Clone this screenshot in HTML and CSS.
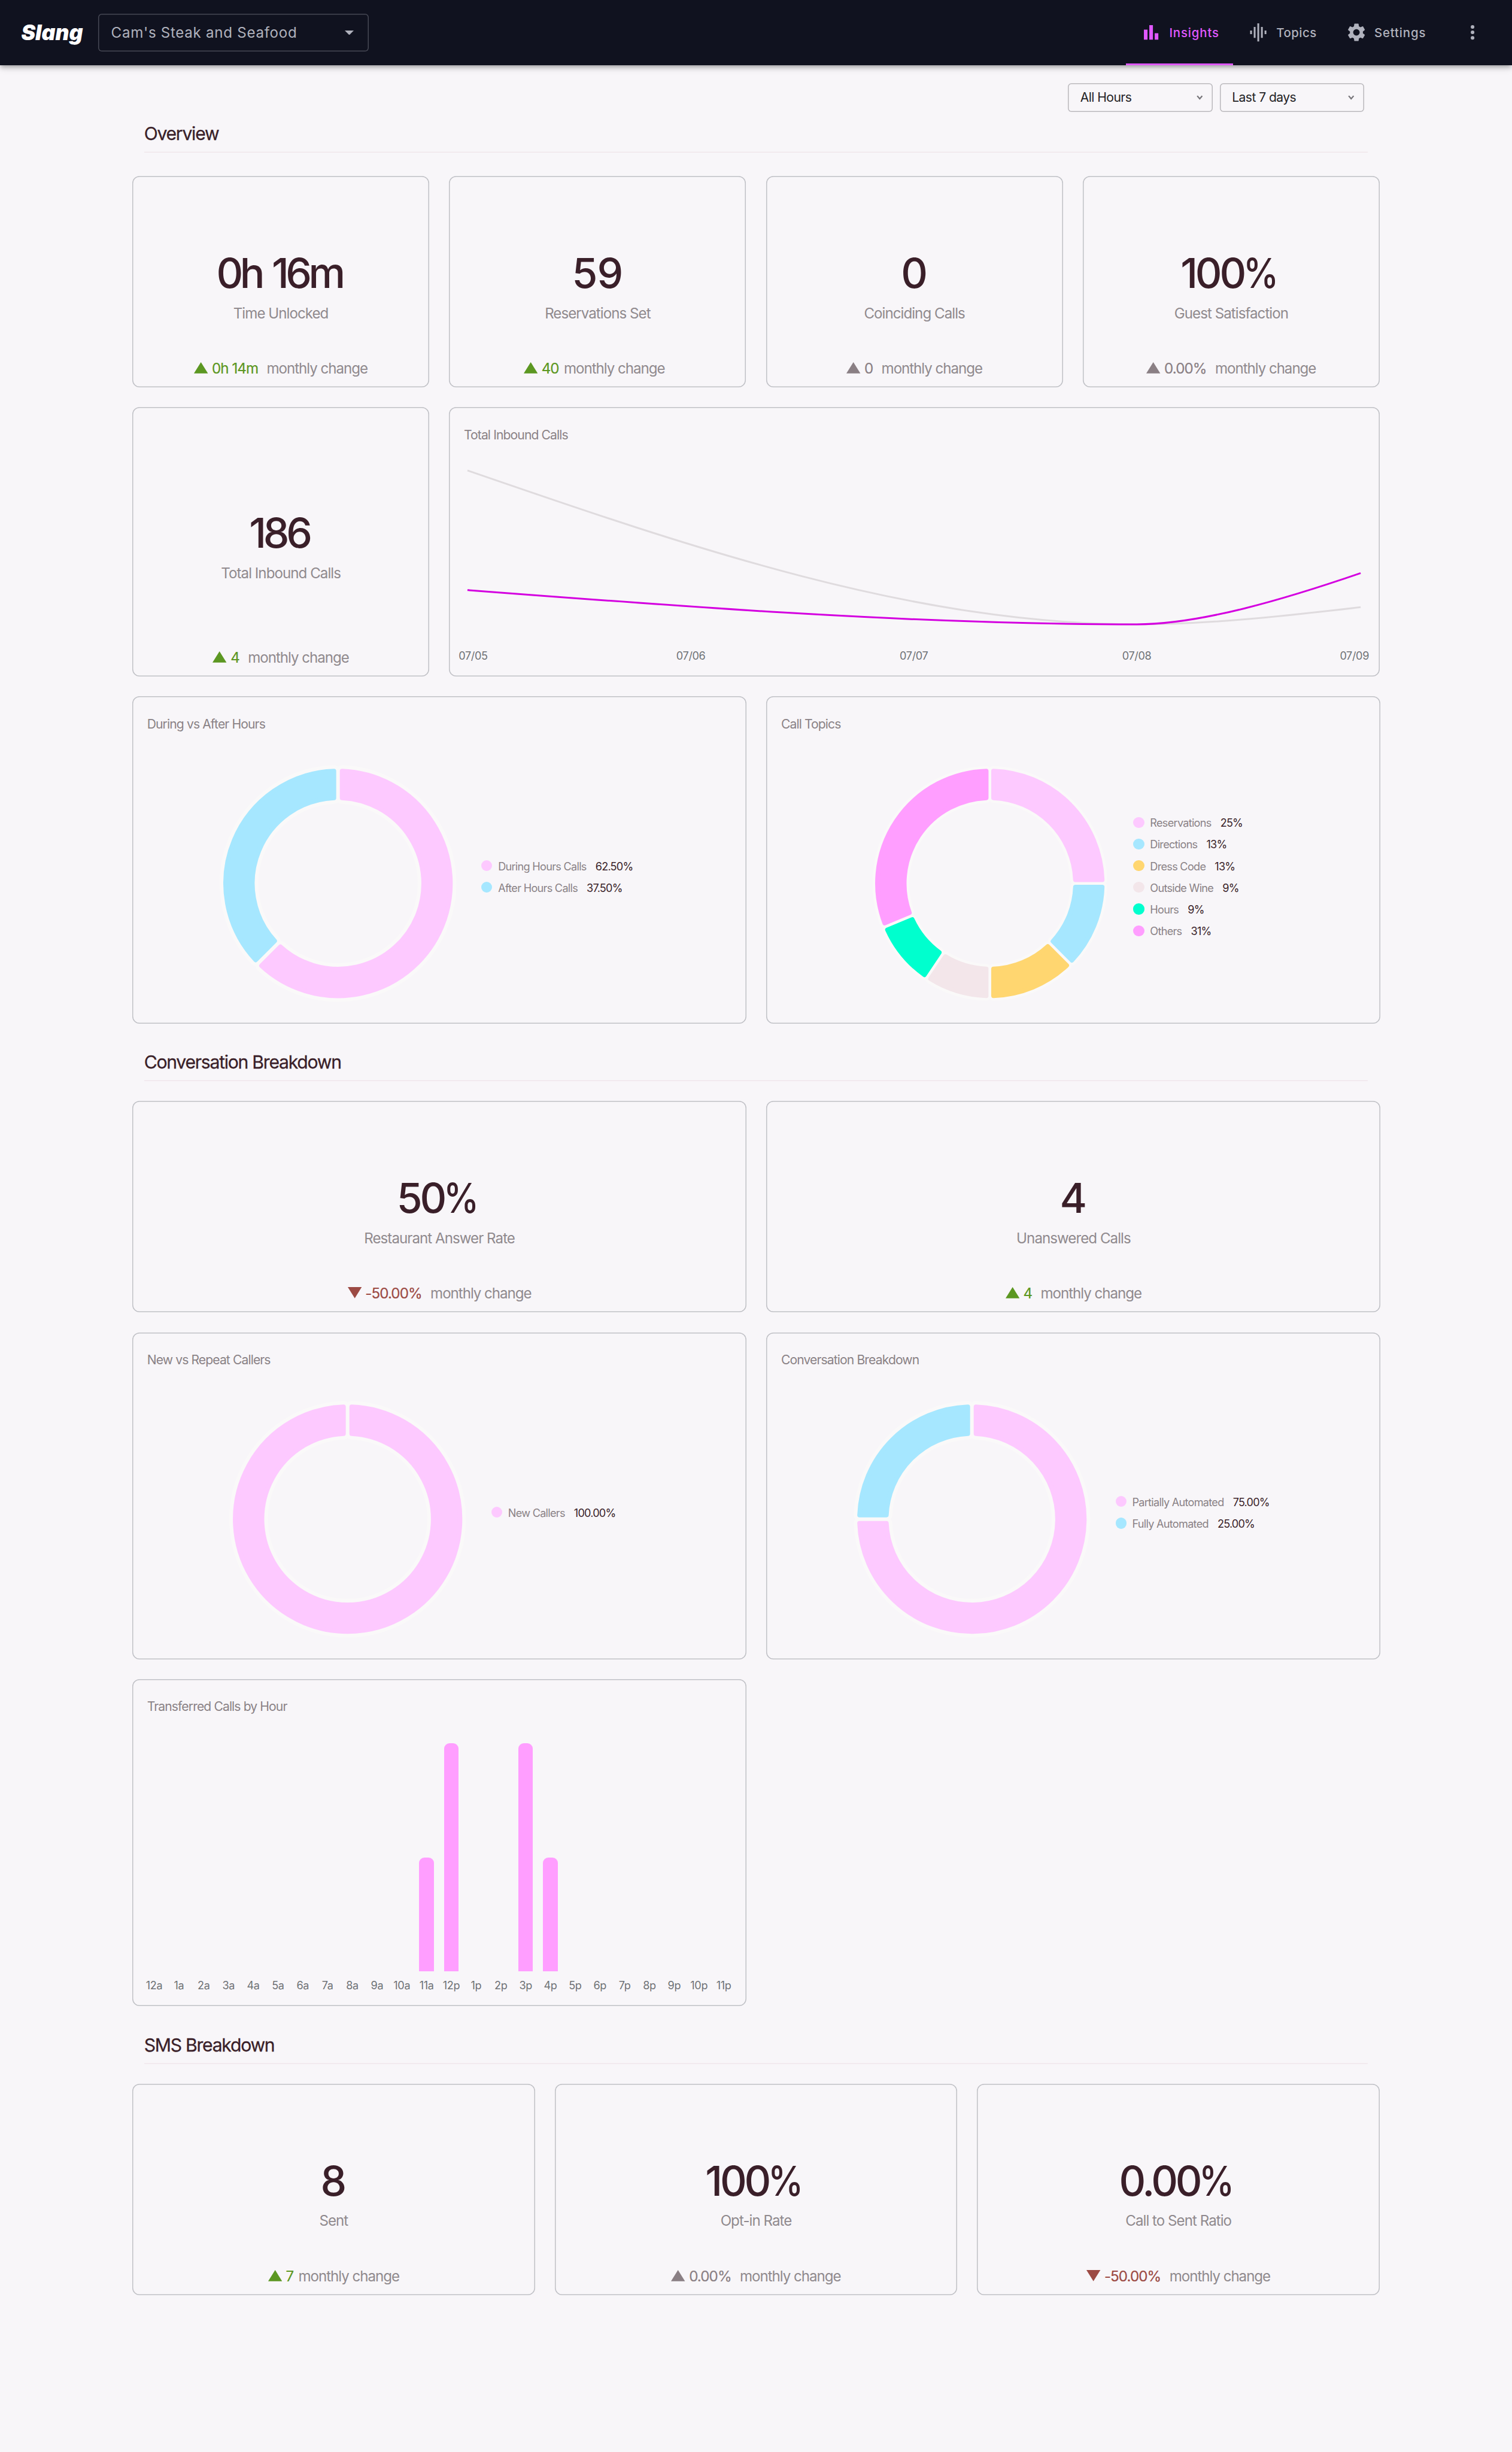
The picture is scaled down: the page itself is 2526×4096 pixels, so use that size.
FILE: index.html
```html
<!DOCTYPE html>
<html lang="en">
<head>
<meta charset="utf-8">
<title>Slang – Insights</title>
<link rel="stylesheet" href="styles.css">
</head>
<body>
<header class="topbar">
  <div class="logo">Slang</div>
  <div class="location">
    <span>Cam's Steak and Seafood</span>
    <svg class="location-arrow" viewBox="0 0 10 5"><path d="M0 0h10L5 5z"/></svg>
  </div>
  <nav class="nav">
    <a class="tab tab-insights active"><svg class="icon" viewBox="0 0 24 24"><path d="M4 9h4v11H4zm12 4h4v7h-4zm-6-9h4v16h-4z"/></svg><span>Insights</span></a>
    <a class="tab tab-topics"><svg class="icon" viewBox="0 0 24 24"><path d="M7 18h2V6H7v12zm4 4h2V2h-2v20zm-8-8h2v-4H3v4zm12 4h2V6h-2v12zm4-8v4h2v-4h-2z"/></svg><span>Topics</span></a>
    <a class="tab tab-settings"><svg class="icon" viewBox="0 0 24 24"><path d="M19.14,12.94c0.04-0.3,0.06-0.61,0.06-0.94c0-0.32-0.02-0.64-0.07-0.94l2.03-1.58c0.18-0.14,0.23-0.41,0.12-0.61 l-1.92-3.32c-0.12-0.22-0.37-0.29-0.59-0.22l-2.39,0.96c-0.5-0.38-1.03-0.7-1.62-0.94L14.4,2.81c-0.04-0.24-0.24-0.41-0.48-0.41 h-3.84c-0.24,0-0.43,0.17-0.47,0.41L9.25,5.35C8.66,5.59,8.12,5.92,7.63,6.29L5.24,5.33c-0.22-0.08-0.47,0-0.59,0.22L2.74,8.87 C2.62,9.08,2.66,9.34,2.86,9.48l2.03,1.58C4.84,11.36,4.8,11.69,4.8,12s0.02,0.64,0.07,0.94l-2.03,1.58 c-0.18,0.14-0.23,0.41-0.12,0.61l1.92,3.32c0.12,0.22,0.37,0.29,0.59,0.22l2.39-0.96c0.5,0.38,1.03,0.7,1.62,0.94l0.36,2.54 c0.05,0.24,0.24,0.41,0.48,0.41h3.84c0.24,0,0.44-0.17,0.47-0.41l0.36-2.54c0.59-0.24,1.13-0.56,1.62-0.94l2.39,0.96 c0.22,0.08,0.47,0,0.59-0.22l1.92-3.32c0.12-0.22,0.07-0.47-0.12-0.61L19.14,12.94z M12,15.6c-1.98,0-3.6-1.62-3.6-3.6 s1.62-3.6,3.6-3.6s3.6,1.62,3.6,3.6S13.98,15.6,12,15.6z"/></svg><span>Settings</span></a>
    <svg class="icon more" viewBox="0 0 24 24"><circle cx="12" cy="6" r="2"/><circle cx="12" cy="12" r="2"/><circle cx="12" cy="18" r="2"/></svg>
  </nav>
</header>

<main class="page">
  <div class="filters">
    <div class="filter"><span>All Hours</span><svg class="chevron" viewBox="0 0 14 10"><path d="M1.5 1.5 7 8l5.500-6.500"/></svg></div>
    <div class="filter"><span>Last 7 days</span><svg class="chevron" viewBox="0 0 14 10"><path d="M1.500 1.500 7 8l5.500-6.500"/></svg></div>
  </div>

  <h2 class="heading heading-first">Overview</h2>
  <section class="grid grid-4">
    <article class="card kpi">
      <div class="kpi-body"><div class="number time">0h 16m</div><div class="label">Time Unlocked</div></div>
      <div class="change up"><svg class="tri" viewBox="0 0 31 25"><path d="M0 25 15.500 0 31 25z"/></svg><b>0h 14m</b><span>monthly change</span></div>
    </article>
    <article class="card kpi">
      <div class="kpi-body"><div class="number wide">59</div><div class="label">Reservations Set</div></div>
      <div class="change up tight shifted"><svg class="tri" viewBox="0 0 31 25"><path d="M0 25 15.500 0 31 25z"/></svg><b>40</b><span>monthly change</span></div>
    </article>
    <article class="card kpi">
      <div class="kpi-body"><div class="number">0</div><div class="label">Coinciding Calls</div></div>
      <div class="change"><svg class="tri" viewBox="0 0 31 25"><path d="M0 25 15.500 0 31 25z"/></svg><b>0</b><span>monthly change</span></div>
    </article>
    <article class="card kpi">
      <div class="kpi-body"><div class="number percent">100<span class="sign">%</span></div><div class="label">Guest Satisfaction</div></div>
      <div class="change"><svg class="tri" viewBox="0 0 31 25"><path d="M0 25 15.500 0 31 25z"/></svg><b>0.00%</b><span>monthly change</span></div>
    </article>
    <article class="card kpi tall">
      <div class="kpi-body"><div class="number">186</div><div class="label">Total Inbound Calls</div></div>
      <div class="change up"><svg class="tri" viewBox="0 0 31 25"><path d="M0 25 15.500 0 31 25z"/></svg><b>4</b><span>monthly change</span></div>
    </article>
    <article class="card tall span-3">
      <h3 class="title">Total Inbound Calls</h3>
      <svg class="line-chart" viewBox="0 80 2060 500">
        <path class="line-previous" d="M41 139.400C535 309.800 1029 480.200 1523 480.200C1688 480.200 1853.500 461.300 2018.800 442.300"/>
        <path class="line-current" d="M41 404.300C535 442.200 1029 480.200 1523 480.200C1665 480.200 1853.500 423.500 2018.800 366.800"/>
        <g class="axis">
          <text x="53.600" y="558">07/05</text><text x="535.700" y="558">07/06</text><text x="1029.500" y="558">07/07</text><text x="1523" y="558">07/08</text><text x="2005" y="558">07/09</text>
        </g>
      </svg>
    </article>
  </section>

  <section class="grid grid-2">
    <article class="card chart">
      <h3 class="title">During vs After Hours</h3>
      <div class="donut-row donut-hours">
        <svg class="donut" viewBox="-270 -270 540 540" data-gap="8" data-slices="62.5 #fdc9ff,37.5 #a6e7ff"></svg>
        <ul class="legend">
          <li><i class="dot pink"></i><span>During Hours Calls</span><b>62.50%</b></li>
          <li><i class="dot blue"></i><span>After Hours Calls</span><b>37.50%</b></li>
        </ul>
      </div>
    </article>
    <article class="card chart">
      <h3 class="title">Call Topics</h3>
      <div class="donut-row donut-topics">
        <svg class="donut" viewBox="-270 -270 540 540" data-gap="6" data-slices="25 #fdc9ff,12.5 #a6e7ff,12.5 #ffd670,9.375 #f3e6ea,9.375 #00ffce,31.25 #ff9eff"></svg>
        <ul class="legend">
          <li><i class="dot pink"></i><span>Reservations</span><b>25%</b></li>
          <li><i class="dot blue"></i><span>Directions</span><b>13%</b></li>
          <li><i class="dot yellow"></i><span>Dress Code</span><b>13%</b></li>
          <li><i class="dot blush"></i><span>Outside Wine</span><b>9%</b></li>
          <li><i class="dot green"></i><span>Hours</span><b>9%</b></li>
          <li><i class="dot magenta"></i><span>Others</span><b>31%</b></li>
        </ul>
      </div>
    </article>
  </section>

  <h2 class="heading">Conversation Breakdown</h2>
  <section class="grid grid-2">
    <article class="card kpi">
      <div class="kpi-body"><div class="number percent">50<span class="sign">%</span></div><div class="label">Restaurant Answer Rate</div></div>
      <div class="change down"><svg class="tri" viewBox="0 0 31 25"><path d="M0 0h31L15.500 25z"/></svg><b>-50.00%</b><span>monthly change</span></div>
    </article>
    <article class="card kpi">
      <div class="kpi-body"><div class="number">4</div><div class="label">Unanswered Calls</div></div>
      <div class="change up"><svg class="tri" viewBox="0 0 31 25"><path d="M0 25 15.500 0 31 25z"/></svg><b>4</b><span>monthly change</span></div>
    </article>
    <article class="card chart">
      <h3 class="title">New vs Repeat Callers</h3>
      <div class="donut-row donut-callers">
        <svg class="donut" viewBox="-270 -270 540 540" data-gap="8" data-slices="100 #fdc9ff"></svg>
        <ul class="legend">
          <li><i class="dot pink"></i><span>New Callers</span><b>100.00%</b></li>
        </ul>
      </div>
    </article>
    <article class="card chart">
      <h3 class="title">Conversation Breakdown</h3>
      <div class="donut-row donut-automation">
        <svg class="donut" viewBox="-270 -270 540 540" data-gap="8" data-slices="75 #fdc9ff,25 #a6e7ff"></svg>
        <ul class="legend">
          <li><i class="dot pink"></i><span>Partially Automated</span><b>75.00%</b></li>
          <li><i class="dot blue"></i><span>Fully Automated</span><b>25.00%</b></li>
        </ul>
      </div>
    </article>
    <article class="card chart">
      <h3 class="title">Transferred Calls by Hour</h3>
      <div class="bars">
        <div class="col"><div class="plot"></div>12a</div>
        <div class="col"><div class="plot"></div>1a</div>
        <div class="col"><div class="plot"></div>2a</div>
        <div class="col"><div class="plot"></div>3a</div>
        <div class="col"><div class="plot"></div>4a</div>
        <div class="col"><div class="plot"></div>5a</div>
        <div class="col"><div class="plot"></div>6a</div>
        <div class="col"><div class="plot"></div>7a</div>
        <div class="col"><div class="plot"></div>8a</div>
        <div class="col"><div class="plot"></div>9a</div>
        <div class="col"><div class="plot"></div>10a</div>
        <div class="col"><div class="plot"><div class="bar" style="height:50%"></div></div>11a</div>
        <div class="col"><div class="plot"><div class="bar" style="height:100%"></div></div>12p</div>
        <div class="col"><div class="plot"></div>1p</div>
        <div class="col"><div class="plot"></div>2p</div>
        <div class="col"><div class="plot"><div class="bar" style="height:100%"></div></div>3p</div>
        <div class="col"><div class="plot"><div class="bar" style="height:50%"></div></div>4p</div>
        <div class="col"><div class="plot"></div>5p</div>
        <div class="col"><div class="plot"></div>6p</div>
        <div class="col"><div class="plot"></div>7p</div>
        <div class="col"><div class="plot"></div>8p</div>
        <div class="col"><div class="plot"></div>9p</div>
        <div class="col"><div class="plot"></div>10p</div>
        <div class="col"><div class="plot"></div>11p</div>
      </div>
    </article>
  </section>

  <h2 class="heading">SMS Breakdown</h2>
  <section class="grid grid-3">
    <article class="card kpi">
      <div class="kpi-body"><div class="number">8</div><div class="label">Sent</div></div>
      <div class="change up tight"><svg class="tri" viewBox="0 0 31 25"><path d="M0 25 15.500 0 31 25z"/></svg><b>7</b><span>monthly change</span></div>
    </article>
    <article class="card kpi">
      <div class="kpi-body"><div class="number percent">100<span class="sign">%</span></div><div class="label">Opt-in Rate</div></div>
      <div class="change"><svg class="tri" viewBox="0 0 31 25"><path d="M0 25 15.500 0 31 25z"/></svg><b>0.00%</b><span>monthly change</span></div>
    </article>
    <article class="card kpi">
      <div class="kpi-body"><div class="number percent">0.00<span class="sign">%</span></div><div class="label">Call to Sent Ratio</div></div>
      <div class="change down"><svg class="tri" viewBox="0 0 31 25"><path d="M0 0h31L15.500 25z"/></svg><b>-50.00%</b><span>monthly change</span></div>
    </article>
  </section>
</main>
<script src="charts.js"></script>
</body>
</html>
```
FILE: styles.css
```css
/* 1rem is ten layout units; everything scales with it. */
html { font-size: 15.0896px; }
* { box-sizing: border-box; margin: 0; padding: 0; }
body {
  min-height: 271.4rem;
  background: #f8f6f9;
  color: #3a1f29;
  font-family: Inter, "Liberation Sans", sans-serif;
  font-weight: 400;
}
svg { display: block; }

/* Top bar */
.topbar {
  position: relative;
  display: flex;
  align-items: center;
  height: 7.2rem;
  padding: 0 3.2rem 0 2.35rem;
  background: #10121f;
  color: #b0b2bd;
  box-shadow: 0 .2rem .4rem -.1rem rgba(0,0,0,.2), 0 .4rem .5rem rgba(0,0,0,.14), 0 .1rem 1rem rgba(0,0,0,.12);
}
.logo {
  width: 8.5rem;
  color: #fff;
  font-size: 2.35rem;
  font-style: italic;
  font-weight: 900;
  letter-spacing: 0;
}
.location {
  display: flex;
  align-items: center;
  justify-content: space-between;
  width: 30rem;
  height: 4.2rem;
  padding: 0 1.7rem 0 1.45rem;
  border-radius: .4rem;
  box-shadow: inset 0 0 0 .1rem #464854;
  font-size: 1.6rem;
  letter-spacing: .029em;
}
.location-arrow { width: 1rem; height: .5rem; fill: currentColor; }
.nav { display: flex; align-items: center; height: 100%; margin-left: auto; }
.tab {
  display: flex;
  align-items: center;
  gap: .8rem;
  height: 100%;
  padding-left: 1.6rem;
  font-size: 1.35rem;
  font-weight: 500;
  letter-spacing: .043em;
}
.tab-insights { width: 11.85rem; }
.tab-topics { width: 10.85rem; letter-spacing: .026em; }
.tab-settings { width: 12.05rem; }
.tab.active { color: #e058ff; box-shadow: inset 0 -.2rem 0 #e058ff; }
.icon { width: 2.4rem; height: 2.4rem; fill: currentColor; }
.more { margin-left: 2.4rem; }

/* Page frame */
.page { padding: 2rem 0 0 14.65rem; }
.filters { display: flex; gap: .8rem; width: 136.4rem; justify-content: flex-end; }
.filter {
  display: flex;
  align-items: center;
  justify-content: space-between;
  width: 16rem;
  height: 3.2rem;
  padding: 0 1.1rem 0 1.35rem;
  border-radius: .4rem;
  box-shadow: inset 0 0 0 .1rem #bab8bc;
  color: #232225;
  font-size: 1.4rem;
  letter-spacing: -.027em;
}
.chevron { width: .7rem; height: .5rem; fill: none; stroke: #77757a; stroke-width: 3; }

.heading {
  width: 135.45rem;
  height: 3.33rem;
  margin: 3.07rem 0 2.2rem 1.3rem;
  box-shadow: inset 0 -.1rem 0 #f0e6eb;
  color: #3a1f29;
  font-size: 2rem;
  font-weight: 400;
  letter-spacing: -.042em;
  line-height: 2.4rem;
  -webkit-text-stroke: .02rem currentColor;
}
.heading-first { margin: 1.17rem 0 2.6rem 1.3rem; }

.grid { display: grid; gap: 2.2rem; }
.grid-4 { width: 138.1rem; grid-template-columns: repeat(4, 1fr); }
.grid-3 { width: 138.1rem; grid-template-columns: repeat(3, 1fr); }
.grid-2 { width: 138.2rem; grid-template-columns: repeat(2, 1fr); }
.grid + .grid { margin-top: 2.2rem; }
.span-3 { grid-column: span 3; }

/* Cards */
.card { border-radius: .8rem; box-shadow: inset 0 0 0 .1rem #c0c1c6; }
.kpi { display: flex; flex-direction: column; height: 23.4rem; padding-top: 3.88rem; }
.tall { height: 29.8rem; }
.chart { height: 36.2rem; }
.kpi-body {
  flex: 1;
  display: flex;
  flex-direction: column;
  align-items: center;
  justify-content: center;
  gap: .72rem;
}
.number { font-size: 4.6rem; font-weight: 500; line-height: 5.5rem; letter-spacing: -.075em; margin-right: .075em; }
.number.time { letter-spacing: -.08em; word-spacing: .06em; }
.number.wide { letter-spacing: -.01em; margin-right: .01em; }
.number.percent { letter-spacing: -.06em; margin-right: .06em; }
/* The percent sign is set narrower than the figures beside it. */
.sign { display: inline-block; margin: 0 -.06em 0 -.02em; transform: scaleX(.86); transform-origin: left; }
.label { color: #908a8e; font-size: 1.6rem; line-height: 2rem; letter-spacing: -.04em; }
.change {
  display: flex;
  align-items: baseline;
  justify-content: center;
  height: 3.08rem;
  color: #908a8e;
  font-size: 1.6rem;
  line-height: 2rem;
  letter-spacing: -.043em;
}
.change b { margin: 0 .95rem 0 .42rem; font-weight: 400; letter-spacing: -.038em; color: #8a7f84; -webkit-text-stroke: .015rem currentColor; }
.change.tight b { margin-right: .55rem; }
.change.shifted { padding-right: .75rem; }
.tri { width: 1.55rem; height: 1.25rem; fill: #8a7f84; }
.up b { color: #5c9722; }
.up .tri { fill: #5c9722; }
.down b { color: #9c4a44; }
.down .tri { fill: #9c4a44; }

.title {
  padding: 2.07rem 0 0 1.63rem;
  color: #8a8286;
  font-size: 1.4rem;
  font-weight: 400;
  letter-spacing: -.042em;
  line-height: 2rem;
  height: 4rem;
}

/* Line chart */
.line-chart { width: 103rem; height: 25rem; }
.line-previous, .line-current { fill: none; stroke-width: 4; }
.line-previous { stroke: #dfdbde; }
.line-current { stroke: #d400e0; }
.axis { fill: #6f7276; font-size: 24px; letter-spacing: -.02em; text-anchor: middle; }

/* Donut charts */
.donut-row { display: flex; align-items: center; margin-top: 3.22rem; }
.donut-hours { padding-left: 9.25rem; }
.donut-topics { padding-left: 11.23rem; }
.donut-callers { padding-left: 10.35rem; }
.donut-automation { padding-left: 9.25rem; }
.donut { width: 27rem; height: 27rem; }
.legend { list-style: none; margin-left: 2.4rem; padding-bottom: 1.56rem; color: #8a8286; font-size: 1.2rem; letter-spacing: -.039em; }
.legend li { display: flex; align-items: center; height: 2.4rem; }
.legend span, .legend b { padding-top: .08rem; }
.legend b { margin-left: 1rem; color: #3a1f29; font-weight: 400; letter-spacing: -.044em; }
.dot { width: 1.2rem; height: 1.2rem; margin-right: .65rem; border-radius: 50%; }
.pink { background: #fdc9ff; }
.blue { background: #a6e7ff; }
.yellow { background: #ffd670; }
.blush { background: #f3e6ea; }
.green { background: #00ffce; }
.magenta { background: #ff9eff; }

/* Bar chart */
.bars { display: grid; grid-template-columns: repeat(24, 1fr); margin-top: 3.12rem; padding: 0 1.15rem 0 1.05rem; }
.col { color: #6f7276; font-size: 1.2rem; line-height: 1.6rem; letter-spacing: -.02em; text-align: center; }
.plot { display: flex; align-items: flex-end; justify-content: center; height: 25.22rem; margin-bottom: .72rem; }
.bar { width: 1.62rem; border-radius: .6rem .6rem 0 0; background: #ff9eff; }
```
FILE: charts.js
```js
// Draws each ring as rounded slices, clockwise from twelve o'clock.
const OUTER = 254, INNER = 184.5, CORNER = 5;

const point = (r, a) => `${(r * Math.sin(a)).toFixed(2)} ${(-r * Math.cos(a)).toFixed(2)}`;

function slicePath(start, end, gap) {
  const ro = OUTER - CORNER, ri = INNER + CORNER, inset = gap / 2 + CORNER;
  const o = Math.asin(inset / ro), i = Math.asin(inset / ri);
  const big = end - start > Math.PI ? 1 : 0;
  return `M${point(ro, start + o)}A${ro} ${ro} 0 ${big} 1 ${point(ro, end - o)}` +
    `L${point(ri, end - i)}A${ri} ${ri} 0 ${big} 0 ${point(ri, start + i)}Z`;
}

document.querySelectorAll('.donut').forEach(svg => {
  const gap = Number(svg.dataset.gap);
  let angle = 0, halo = '', slices = '';
  svg.dataset.slices.split(',').forEach(entry => {
    const [share, color] = entry.split(' ');
    const end = angle + share / 100 * 2 * Math.PI;
    const d = slicePath(angle, end, gap);
    halo += `<path d="${d}" fill="none" stroke="#faf9f9" stroke-width="${2 * (CORNER + gap)}" stroke-linejoin="round"/>`;
    slices += `<path d="${d}" fill="${color}" stroke="${color}" stroke-width="${2 * CORNER}" stroke-linejoin="round"/>`;
    angle = end;
  });
  svg.innerHTML = halo + slices;
});
```
